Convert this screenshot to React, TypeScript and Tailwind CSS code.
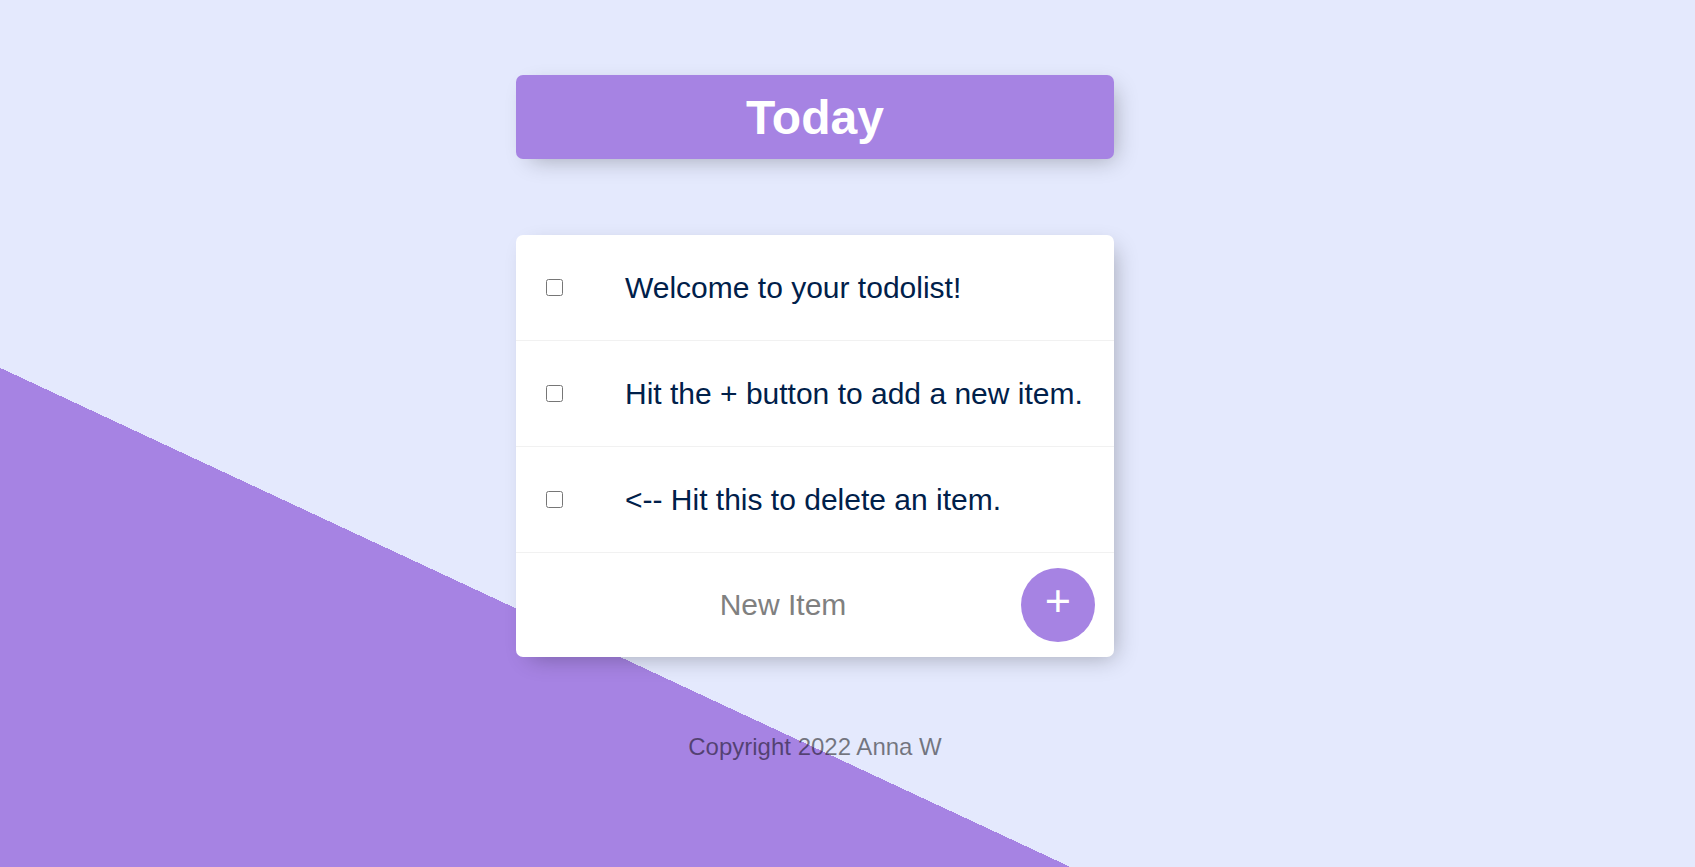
import React from "react";

const items = [
  "Welcome to your todolist!",
  "Hit the + button to add a new item.",
  "<-- Hit this to delete an item.",
];

export default function App() {
  return (
    <div className="w-full h-screen overflow-hidden bg-[#E4E9FD] bg-[linear-gradient(25deg,#A683E3_50%,#E4E9FD_50%)] bg-[length:100%_1526px] bg-no-repeat bg-top font-['Liberation_Sans',Arial,sans-serif]">
      <div className="w-[598px] ml-[516px] pt-[75px] flex flex-col">
        <div className="h-[84px] rounded-[7px] bg-[#A683E3] shadow-[7px_7px_22px_-7px_rgba(0,0,0,0.3)] flex items-center justify-center">
          <h1 className="text-white text-[48px] font-bold leading-[55px] m-0">Today</h1>
        </div>

        <div className="mt-[76px] rounded-[7px] bg-white shadow-[7px_7px_22px_-7px_rgba(0,0,0,0.3)] flex flex-col">
          {items.map((t) => (
            <div key={t} className="h-[106px] flex items-center border-b border-[#F1F1F1]">
              <input
                type="checkbox"
                className="ml-[30px] m-0 w-[17px] h-[17px] shrink-0"
              />
              <p className="ml-[62px] text-[30px] leading-[34px] text-[#00204a] font-extralight m-0">
                {t}
              </p>
            </div>
          ))}
          <form className="h-[104px] flex items-center pl-[50px]" onSubmit={(e) => e.preventDefault()}>
            <input
              type="text"
              placeholder="New Item"
              className="w-[434px] h-[90px] text-center text-[30px] font-extralight text-[#00204a] placeholder:text-[#808080] outline-none border-0 bg-transparent"
            />
            <button
              type="submit"
              className="ml-[21px] w-[74px] h-[74px] rounded-full bg-[#A683E3] text-white text-[45px] leading-none flex items-center justify-center pb-[9px] border-0"
            >
              +
            </button>
          </form>
        </div>

        <footer className="mt-[76px] text-center text-black/50 text-[24px] leading-[28px]">
          Copyright 2022 Anna W
        </footer>
      </div>
    </div>
  );
}
